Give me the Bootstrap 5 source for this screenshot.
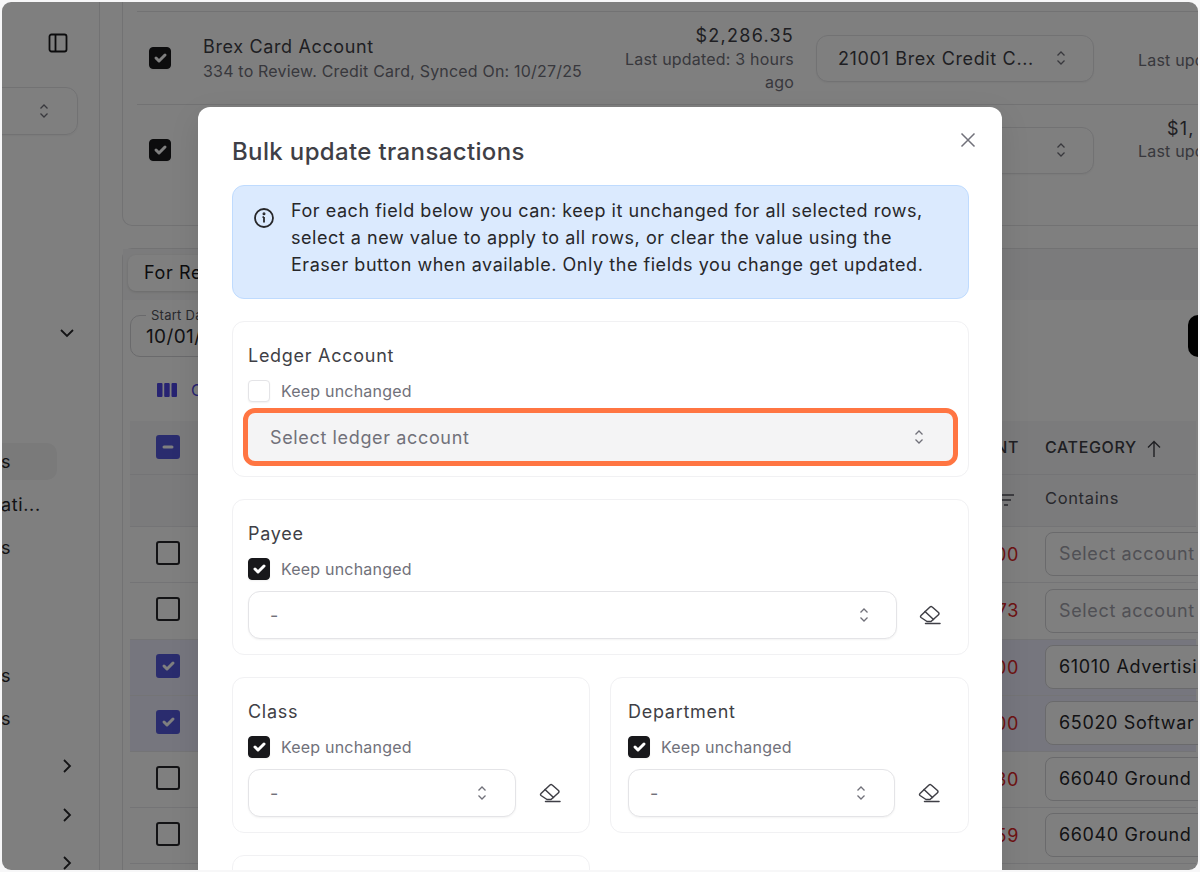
<!doctype html>
<html lang="en">
<head>
<meta charset="utf-8">
<title>Bulk update transactions</title>
<link rel="stylesheet" href="https://cdn.jsdelivr.net/npm/bootstrap@5.3.0/dist/css/bootstrap.min.css">
<style>
html,body{height:100%;margin:0;background:#f7f7f8;overflow:hidden}
body{font-family:Inter,"Liberation Sans",sans-serif;color:#3f3f46;letter-spacing:.04em}
.frame{position:relative;margin:2px 2px 0;height:868px;border-radius:9px;overflow:hidden;background:#fff;display:flex}
.scrim{position:absolute;inset:0;background:rgba(0,0,0,.5)}
.side{width:98px;flex:none;border-right:1px solid #e4e4e7;display:flex;flex-direction:column;align-items:stretch}
.side-icon{display:block;flex:none;margin:31px 0 0 46px;color:#18181b}
.side-select{margin:34px 21px 0 -10px;height:48px;flex:none;border:1px solid #e4e4e7;border-radius:0 12px 12px 0;display:flex;align-items:center;justify-content:flex-end;padding-right:28px;box-shadow:0 1px 2px rgba(0,0,0,.05);color:#71717a}
.side-chev{display:block;flex:none;margin-left:57px;color:#27272a}
.side-right{margin-left:60px}
.side-nav{font-size:18px;height:43px;flex:none;line-height:43px;margin-left:-1px;color:#27272a}
.side-on{background:#f4f4f5;margin-right:42px;border-radius:0 10px 10px 0;height:37px;line-height:37px;margin-top:3px;margin-bottom:3px}
.gap-a{margin-top:193px}
.gap-b{height:102px;flex:none}
.gap-c{height:85px;flex:none}
.gap-d{height:18px;flex:none}
.gap-e{margin-top:33px}
.gap-f{margin-top:32px}
.main{flex:1;min-width:0;padding-left:22px}
.acct{border:1px solid #e4e4e7;border-top:0;border-right:0;height:224px;padding:9px 0 0 14px;border-bottom-left-radius:10px;box-sizing:border-box}
.acct-row{border-top:1px solid #e4e4e7;display:flex;align-items:center;height:93px}
.acct-row+.acct-row{padding-bottom:2px}
.cb{flex:none;width:22px;height:22px;margin:0;border-radius:5px;border:1px solid #e4e4e7;background-color:#fff;background-size:100%;box-shadow:0 1px 2px rgba(0,0,0,.06);float:none}
.cb.form-check-input:checked{background-color:#18181b;border-color:#18181b}
.cb.form-check-input:focus{box-shadow:none}
.acct-row .cb{margin-left:12px}
.cb.cb-t{width:24px;height:24px;border:2px solid #27272a;border-radius:3px;box-shadow:none}
.cb-t.form-check-input:checked,.cb-t.form-check-input:indeterminate{background-color:#5558dd;border-color:#5558dd}
.acct-name{margin-left:32px;width:405px;flex:none;line-height:24px;padding-top:2px}
.t-18{font-size:18px}
.t-16{font-size:16px;color:#71717a;letter-spacing:.012em}
.t-money{font-size:18px;letter-spacing:.07em}
.acct-amt{width:172px;flex:none;text-align:right;line-height:23.5px;margin-left:14px;padding-top:3px}
.sel-box{display:flex;align-items:center;justify-content:space-between;border:1px solid #e4e4e7;border-radius:12px;background:#fff;box-shadow:0 1px 2px rgba(0,0,0,.05);font-size:18px;color:#3f3f46}
.acct-sel{width:278px;height:47px;margin-left:22px;padding:0 27px 0 21px;flex:none;white-space:nowrap}
.acct-last{margin-left:44px;flex:none;text-align:right;line-height:23px;white-space:nowrap}
.last-one{margin-top:4px}
.last-two{margin-bottom:21px}
.money-shift{margin-right:10px}
.grid-card{margin-top:22px;border:1px solid #e4e4e7;border-right:0;border-bottom:0;border-top-left-radius:10px;height:640px}
.tabs{height:51px;background:#f7f7f8;padding:6px 0 0 5px}
.tab{display:block;width:150px;height:36px;line-height:35px;background:#fff;border-radius:8px;font-size:18px;padding-left:16px;color:#18181b;box-shadow:0 1px 3px rgba(0,0,0,.14)}
.filters{display:flex;justify-content:space-between;padding:15px 0 0 7px;height:71px}
.date-box{position:relative;width:300px;height:42px;border:1px solid #d4d4d8;border-radius:10px;padding:9px 0 0 15px;font-size:19px;line-height:24px;color:#27272a;letter-spacing:.02em}
.date-lab{position:absolute;left:15px;top:-9px;background:#fff;padding:0 5px;font-size:13px;line-height:16px;color:#52525b;letter-spacing:.02em}
.black-btn{width:10px;height:42px;background:#000;border-radius:10px 0 0 10px}
.cols{height:37px;margin-bottom:13px;display:flex;align-items:center;padding-left:34px;gap:14px;color:#4f46e5;font-size:16px}
.tbl{table-layout:fixed;width:1066px;margin:0 0 0 7px;font-size:18px;--bs-table-bg:transparent;color:#27272a}
.tbl td,.tbl th{padding:0;vertical-align:middle;border-color:#e9e9ec}
.tbl th{font-weight:500;font-size:16px;color:#3f3f46;height:53px;background:#f7f7f8}
.tbl .fil td{height:52px;background:#f7f7f8;font-size:16.5px;color:#52525b;padding-bottom:3px}
.tbl .dat td{height:56px}
.tbl .dat.tall td{height:57px}
.tbl .pick td{background:#ededfc}
.c1{width:76px}
.c2{width:786px}
.c3{width:27px}
.tbl .cat-cell{padding-left:26px}
.tbl .fil-ico{padding-right:4px}
.amt{text-align:right;color:#dc2626;white-space:nowrap}
.cat-box{display:block;width:180px;height:44px;line-height:42px;padding-left:13px;border:1px solid #d4d4d8;border-radius:8px;white-space:nowrap;overflow:hidden;color:#27272a;background:#fff}
.cat-ph{color:#a1a1aa}
.sheet{position:absolute;left:196px;top:105px;width:804px;height:790px;border:0;border-radius:12px 12px 0 0;background:#fff;padding:0 33px 0 34px;box-shadow:0 10px 30px rgba(0,0,0,.1)}
.sheet>*{flex:none}
.sheet-head{height:78px;padding:0;border:0;position:relative;display:flex;align-items:flex-start}
.sheet-title{font-size:24px;font-weight:500;line-height:30px;margin:30px 0 0;color:#3f3f46;letter-spacing:.015em}
.sheet-x{position:absolute;right:-9px;top:23px;width:20px;height:20px;padding:0;border:0;background:none;color:#71717a;display:block}
.sheet-x svg,.erase svg{display:block}
.note{display:flex;margin:0 0 22px;padding:11px 32px 18px 20px;border:1px solid #bfdbfe;border-radius:12px;background:#dbeafe;color:#27272a;font-size:18px;line-height:27px;height:114px;letter-spacing:.03em}
.note svg{flex:none;margin:10px 16px 0 0;color:#27272a}
.fld{border:1px solid #f1f1f3;border-radius:12px;padding:21px 15px 0;height:156px;background:#fff;margin-bottom:22px;box-shadow:none}
.fld-lab{font-size:18px;line-height:26px;color:#3f3f46;margin-bottom:11px;letter-spacing:.04em}
.keep{display:flex;align-items:center;gap:11px;font-size:16px;line-height:22px;color:#71717a;margin-bottom:11px;height:22px;letter-spacing:.012em}
.sel-line{display:flex;align-items:center;gap:22px}
.fld .sel-box{height:48px;flex:1;min-width:0;padding:0 27px 0 21px;color:#71717a}
.fld .sel-box.sel-hot{background:#f4f4f5;border-color:transparent;box-shadow:none;outline:5.5px solid #ff7542;outline-offset:0;border-radius:7px;padding-right:28px}
.erase{flex:none;width:22px;height:22px;margin-right:12px;padding:0;border:0;background:none;color:#3f3f46;display:block}
.pair{display:flex;gap:20px}
.pair>*{flex:1 1 0;min-width:0}
.pair>*:first-child{flex:0 0 358px}
.pair>.fld:last-child{padding-left:17px}
.pair .sel-line{gap:23px}
.pair .erase{margin-right:13px}
.pair .fld .sel-box{padding-right:28px}
</style>
</head>
<body>
<div class="frame">
  <aside class="side">
    <svg class="side-icon" width="20" height="20" viewBox="0 0 20 20" fill="none" stroke="currentColor" stroke-width="1.8"><rect x="1.500" y="1.500" width="17" height="17" rx="2"/><path d="M7.500 1.500v17"/></svg>
    <div class="side-select"><svg width="10" height="16" viewBox="0 0 10 16" fill="none" stroke="currentColor" stroke-width="1.3"><path d="M1.5 5.5 5 2l3.500 3.500M1.500 10.500 5 14l3.500-3.500"/></svg></div>
    <svg class="side-chev gap-a" width="16" height="10" viewBox="0 0 16 10" fill="none" stroke="currentColor" stroke-width="1.8"><path d="m2 2 6 6 6-6"/></svg>
    <div class="gap-b"></div>
    <div class="side-nav side-on">s</div>
    <div class="side-nav">ati...</div>
    <div class="side-nav">s</div>
    <div class="gap-c"></div>
    <div class="side-nav">s</div>
    <div class="side-nav">s</div>
    <div class="gap-d"></div>
    <svg class="side-chev side-right" width="10" height="16" viewBox="0 0 10 16" fill="none" stroke="currentColor" stroke-width="1.8"><path d="m2 2 6 6-6 6"/></svg>
    <svg class="side-chev side-right gap-e" width="10" height="16" viewBox="0 0 10 16" fill="none" stroke="currentColor" stroke-width="1.8"><path d="m2 2 6 6-6 6"/></svg>
    <svg class="side-chev side-right gap-f" width="10" height="16" viewBox="0 0 10 16" fill="none" stroke="currentColor" stroke-width="1.8"><path d="m2 2 6 6-6 6"/></svg>
  </aside>
  <main class="main">
    <section class="acct">
      <div class="acct-row">
        <input class="form-check-input cb" type="checkbox" checked aria-label="Brex Card Account">
        <div class="acct-name"><div class="t-18">Brex Card Account</div><div class="t-16">334 to Review. Credit Card, Synced On: 10/27/25</div></div>
        <div class="acct-amt"><div class="t-money">$2,286.35</div><div class="t-16">Last updated: 3 hours ago</div></div>
        <div class="sel-box acct-sel"><span>21001 Brex Credit C...</span><svg width="10" height="16" viewBox="0 0 10 16" fill="none" stroke="#71717a" stroke-width="1.300"><path d="M1.500 5.500 5 2l3.500 3.500M1.500 10.500 5 14l3.500-3.500"/></svg></div>
        <div class="acct-last last-one t-16">Last upd</div>
      </div>
      <div class="acct-row">
        <input class="form-check-input cb" type="checkbox" checked aria-label="Second account">
        <div class="acct-name"></div>
        <div class="acct-amt"></div>
        <div class="sel-box acct-sel justify-content-end"><svg width="10" height="16" viewBox="0 0 10 16" fill="none" stroke="#71717a" stroke-width="1.300"><path d="M1.500 5.500 5 2l3.500 3.500M1.500 10.500 5 14l3.500-3.500"/></svg></div>
        <div class="acct-last last-two"><div class="t-money money-shift">$1,</div><div class="t-16">Last upd</div></div>
      </div>
    </section>
    <section class="grid-card">
      <div class="tabs"><span class="tab">For Re</span></div>
      <div class="filters">
        <div class="date-box"><span class="date-lab">Start Da</span>10/01/</div>
        <div class="black-btn"></div>
      </div>
      <div class="cols"><svg width="20" height="14" viewBox="0 0 20 14" fill="currentColor"><rect width="5.500" height="14" rx="1"/><rect x="7.200" width="5.500" height="14" rx="1"/><rect x="14.500" width="5.500" height="14" rx="1"/></svg><span>C</span></div>
      <table class="table tbl">
        <colgroup><col class="c1"><col class="c2"><col class="c3"><col></colgroup>
        <tbody>
          <tr><th class="text-center"><input class="form-check-input cb cb-t" id="allBox" type="checkbox" aria-label="Select all"></th><th></th><th class="text-end">NT</th><th class="cat-cell">CATEGORY <svg class="ms-1" width="16" height="18" viewBox="0 0 16 18" fill="none" stroke="currentColor" stroke-width="1.400"><path d="M8 17V1.500M2 7.500l6-6 6 6"/></svg></th></tr>
          <tr class="fil"><td></td><td></td><td class="text-end fil-ico"><svg width="16" height="12" viewBox="0 0 16 12" fill="none" stroke="currentColor" stroke-width="1.500"><path d="M1 1h14M3 6h9M5 11h4"/></svg></td><td class="cat-cell">Contains</td></tr>
          <tr class="dat"><td class="text-center"><input class="form-check-input cb cb-t" type="checkbox" aria-label="Row 1"></td><td></td><td class="amt">00</td><td class="cat-cell"><span class="cat-box cat-ph">Select account</span></td></tr>
          <tr class="dat tall"><td class="text-center"><input class="form-check-input cb cb-t" type="checkbox" aria-label="Row 2"></td><td></td><td class="amt">73</td><td class="cat-cell"><span class="cat-box cat-ph">Select account</span></td></tr>
          <tr class="dat pick"><td class="text-center"><input class="form-check-input cb cb-t" type="checkbox" checked aria-label="Row 3"></td><td></td><td class="amt">00</td><td class="cat-cell"><span class="cat-box">61010 Advertisi</span></td></tr>
          <tr class="dat pick"><td class="text-center"><input class="form-check-input cb cb-t" type="checkbox" checked aria-label="Row 4"></td><td></td><td class="amt">00</td><td class="cat-cell"><span class="cat-box">65020 Softwar</span></td></tr>
          <tr class="dat"><td class="text-center"><input class="form-check-input cb cb-t" type="checkbox" aria-label="Row 5"></td><td></td><td class="amt">30</td><td class="cat-cell"><span class="cat-box">66040 Ground</span></td></tr>
          <tr class="dat"><td class="text-center"><input class="form-check-input cb cb-t" type="checkbox" aria-label="Row 6"></td><td></td><td class="amt">59</td><td class="cat-cell"><span class="cat-box">66040 Ground</span></td></tr>
          <tr class="dat"><td></td><td></td><td></td><td></td></tr>
        </tbody>
      </table>
    </section>
  </main>
  <div class="scrim"></div>
  <div class="modal-content sheet" role="dialog" aria-label="Bulk update transactions">
    <div class="modal-header sheet-head">
      <h5 class="modal-title sheet-title">Bulk update transactions</h5>
      <button class="sheet-x" type="button" aria-label="Close"><svg width="20" height="20" viewBox="0 0 20 20" fill="none" stroke="currentColor" stroke-width="1.500"><path d="m3.500 3.500 13 13M16.500 3.500l-13 13"/></svg></button>
    </div>
    <div class="note" role="alert">
      <svg width="22" height="22" viewBox="0 0 22 22" fill="none" stroke="currentColor" stroke-width="1.800"><circle cx="11" cy="11" r="9"/><path d="M11 10v5.500M9.500 10.200H11"/><circle cx="11" cy="6.800" r=".6" fill="currentColor"/></svg>
      <div>For each field below you can: keep it unchanged for all selected rows, select a new value to apply to all rows, or clear the value using the Eraser button when available. Only the fields you change get updated.</div>
    </div>
    <div class="card fld">
      <div class="fld-lab">Ledger Account</div>
      <label class="keep"><input class="form-check-input cb" type="checkbox">Keep unchanged</label>
      <div class="sel-line"><div class="sel-box sel-hot"><span>Select ledger account</span><svg width="10" height="16" viewBox="0 0 10 16" fill="none" stroke="#71717a" stroke-width="1.300"><path d="M1.500 5.500 5 2l3.500 3.500M1.500 10.500 5 14l3.500-3.500"/></svg></div></div>
    </div>
    <div class="card fld">
      <div class="fld-lab">Payee</div>
      <label class="keep"><input class="form-check-input cb" type="checkbox" checked>Keep unchanged</label>
      <div class="sel-line"><div class="sel-box"><span>-</span><svg width="10" height="16" viewBox="0 0 10 16" fill="none" stroke="#71717a" stroke-width="1.300"><path d="M1.500 5.500 5 2l3.500 3.500M1.500 10.500 5 14l3.500-3.500"/></svg></div>
      <button class="erase" type="button" aria-label="Clear"><svg width="22" height="22" viewBox="0 0 22 22" fill="none" stroke="currentColor" stroke-width="1.500" stroke-linejoin="round" stroke-linecap="round"><path d="M2 11.500 11 3a1.600 1.600 0 0 1 2.200 0l6.300 5.500a1.500 1.500 0 0 1 0 2.200L12 17.500H8l-6-4a1.300 1.300 0 0 1 0-2Z"/><path d="m6 7.500 8.500 8M6.500 19.500H21"/></svg></button></div>
    </div>
    <div class="pair">
      <div class="card fld">
        <div class="fld-lab">Class</div>
        <label class="keep"><input class="form-check-input cb" type="checkbox" checked>Keep unchanged</label>
        <div class="sel-line"><div class="sel-box"><span>-</span><svg width="10" height="16" viewBox="0 0 10 16" fill="none" stroke="#71717a" stroke-width="1.300"><path d="M1.500 5.500 5 2l3.500 3.500M1.500 10.500 5 14l3.500-3.500"/></svg></div>
        <button class="erase" type="button" aria-label="Clear"><svg width="22" height="22" viewBox="0 0 22 22" fill="none" stroke="currentColor" stroke-width="1.500" stroke-linejoin="round" stroke-linecap="round"><path d="M2 11.500 11 3a1.600 1.600 0 0 1 2.200 0l6.300 5.500a1.500 1.500 0 0 1 0 2.200L12 17.500H8l-6-4a1.300 1.300 0 0 1 0-2Z"/><path d="m6 7.500 8.500 8M6.500 19.500H21"/></svg></button></div>
      </div>
      <div class="card fld">
        <div class="fld-lab">Department</div>
        <label class="keep"><input class="form-check-input cb" type="checkbox" checked>Keep unchanged</label>
        <div class="sel-line"><div class="sel-box"><span>-</span><svg width="10" height="16" viewBox="0 0 10 16" fill="none" stroke="#71717a" stroke-width="1.300"><path d="M1.500 5.500 5 2l3.500 3.500M1.500 10.500 5 14l3.500-3.500"/></svg></div>
        <button class="erase" type="button" aria-label="Clear"><svg width="22" height="22" viewBox="0 0 22 22" fill="none" stroke="currentColor" stroke-width="1.500" stroke-linejoin="round" stroke-linecap="round"><path d="M2 11.500 11 3a1.600 1.600 0 0 1 2.200 0l6.300 5.500a1.500 1.500 0 0 1 0 2.200L12 17.500H8l-6-4a1.300 1.300 0 0 1 0-2Z"/><path d="m6 7.500 8.500 8M6.500 19.500H21"/></svg></button></div>
      </div>
    </div>
    <div class="pair"><div class="card fld"></div><div></div></div>
  </div>
</div>
<script src="https://cdn.jsdelivr.net/npm/bootstrap@5.3.0/dist/js/bootstrap.bundle.min.js"></script>
<script>document.getElementById('allBox').indeterminate=true;</script>
</body>
</html>
